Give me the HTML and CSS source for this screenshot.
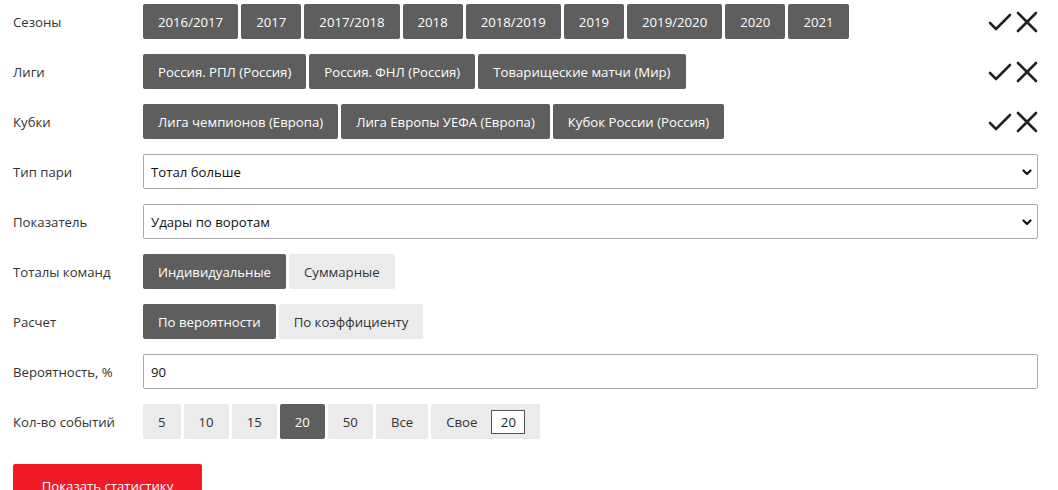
FILE: index.html
```html
<!DOCTYPE html>
<html lang="ru">
<head>
<meta charset="utf-8">
<link rel="stylesheet" href="styles.css">
</head>
<body>
<div class="form">
  <div class="row">
    <div class="label">Сезоны</div>
    <div class="controls">
      <div class="btns">
        <span class="btn dark">2016/2017</span><span class="btn dark">2017</span><span class="btn dark">2017/2018</span><span class="btn dark">2018</span><span class="btn dark">2018/2019</span><span class="btn dark">2019</span><span class="btn dark">2019/2020</span><span class="btn dark">2020</span><span class="btn dark">2021</span>
      </div>
      <div class="icons">
        <svg width="24" height="22" viewBox="0 0 24 22"><path d="M2 12 L8 18 L22 4" fill="none" stroke="#222" stroke-width="2.6" stroke-linecap="round" stroke-linejoin="round"/></svg>
        <svg width="22" height="22" viewBox="0 0 22 22"><path d="M2 2 L20 20 M20 2 L2 20" fill="none" stroke="#222" stroke-width="2.6" stroke-linecap="round"/></svg>
      </div>
    </div>
  </div>
  <div class="row">
    <div class="label">Лиги</div>
    <div class="controls">
      <div class="btns">
        <span class="btn dark">Россия. РПЛ (Россия)</span><span class="btn dark">Россия. ФНЛ (Россия)</span><span class="btn dark">Товарищеские матчи (Мир)</span>
      </div>
      <div class="icons">
        <svg width="24" height="22" viewBox="0 0 24 22"><path d="M2 12 L8 18 L22 4" fill="none" stroke="#222" stroke-width="2.6" stroke-linecap="round" stroke-linejoin="round"/></svg>
        <svg width="22" height="22" viewBox="0 0 22 22"><path d="M2 2 L20 20 M20 2 L2 20" fill="none" stroke="#222" stroke-width="2.6" stroke-linecap="round"/></svg>
      </div>
    </div>
  </div>
  <div class="row">
    <div class="label">Кубки</div>
    <div class="controls">
      <div class="btns">
        <span class="btn dark">Лига чемпионов (Европа)</span><span class="btn dark">Лига Европы УЕФА (Европа)</span><span class="btn dark">Кубок России (Россия)</span>
      </div>
      <div class="icons">
        <svg width="24" height="22" viewBox="0 0 24 22"><path d="M2 12 L8 18 L22 4" fill="none" stroke="#222" stroke-width="2.6" stroke-linecap="round" stroke-linejoin="round"/></svg>
        <svg width="22" height="22" viewBox="0 0 22 22"><path d="M2 2 L20 20 M20 2 L2 20" fill="none" stroke="#222" stroke-width="2.6" stroke-linecap="round"/></svg>
      </div>
    </div>
  </div>
  <div class="row">
    <div class="label">Тип пари</div>
    <div class="select">
      <span>Тотал больше</span>
      <svg class="chev" width="10" height="7" viewBox="0 0 10 7"><path d="M1.5 1.5 L5 5 L8.5 1.5" fill="none" stroke="#111" stroke-width="2.2" stroke-linecap="round" stroke-linejoin="round"/></svg>
    </div>
  </div>
  <div class="row">
    <div class="label">Показатель</div>
    <div class="select">
      <span>Удары по воротам</span>
      <svg class="chev" width="10" height="7" viewBox="0 0 10 7"><path d="M1.5 1.5 L5 5 L8.5 1.5" fill="none" stroke="#111" stroke-width="2.2" stroke-linecap="round" stroke-linejoin="round"/></svg>
    </div>
  </div>
  <div class="row">
    <div class="label">Тоталы команд</div>
    <div class="btns">
      <span class="btn dark">Индивидуальные</span><span class="btn light">Суммарные</span>
    </div>
  </div>
  <div class="row">
    <div class="label">Расчет</div>
    <div class="btns">
      <span class="btn dark">По вероятности</span><span class="btn light">По коэффициенту</span>
    </div>
  </div>
  <div class="row">
    <div class="label">Вероятность, %</div>
    <div class="input">90</div>
  </div>
  <div class="row">
    <div class="label">Кол-во событий</div>
    <div class="btns">
      <span class="btn light">5</span><span class="btn light">10</span><span class="btn light">15</span><span class="btn dark">20</span><span class="btn light">50</span><span class="btn light">Все</span><span class="btn light own">Свое <span class="own-box">20</span></span>
    </div>
  </div>
  <div class="submit-row">
    <span class="submit">Показать статистику</span>
  </div>
</div>
</body>
</html>
```

FILE: styles.css
```css
html, body {
  margin: 0;
  padding: 0;
  background: #fff;
}
body {
  font-family: "Open Sans", "Liberation Sans", sans-serif;
  font-size: 13.2px;
  color: #222;
}
.form {
  padding: 4px 20px 0 13px;
}
.row {
  display: grid;
  grid-template-columns: 130px 1fr;
  align-items: center;
  height: 35px;
  margin-bottom: 15px;
}
.label {
  color: #333;
}
.controls {
  display: flex;
  align-items: center;
  justify-content: space-between;
}
.btns {
  display: flex;
  gap: 3px;
}
.btn {
  display: inline-flex;
  align-items: center;
  height: 35px;
  padding: 0 15px;
  border-radius: 2px;
  box-sizing: border-box;
  white-space: nowrap;
}
.btn.dark {
  background: #5e5e5e;
  color: #fff;
}
.btn.light {
  background: #ebebeb;
  color: #333;
}
.own-box {
  display: inline-flex;
  align-items: center;
  justify-content: center;
  width: 34px;
  height: 24px;
  margin-left: 14px;
  box-sizing: border-box;
  background: #fff;
  border: 1px solid #555;
  color: #222;
}
.icons {
  display: flex;
  gap: 4px;
  align-items: center;
}
.select, .input {
  position: relative;
  height: 35px;
  box-sizing: border-box;
  border: 1px solid #a9a9a9;
  border-radius: 2px;
  display: flex;
  align-items: center;
  padding: 0 7px;
  color: #111;
}
.chev {
  position: absolute;
  right: 5px;
  top: 14px;
}
.submit-row {
  margin-top: 25px;
}
.submit {
  display: inline-flex;
  align-items: center;
  justify-content: center;
  width: 189px;
  height: 44px;
  background: #f01a28;
  color: #fff;
  border-radius: 2px;
}
```
